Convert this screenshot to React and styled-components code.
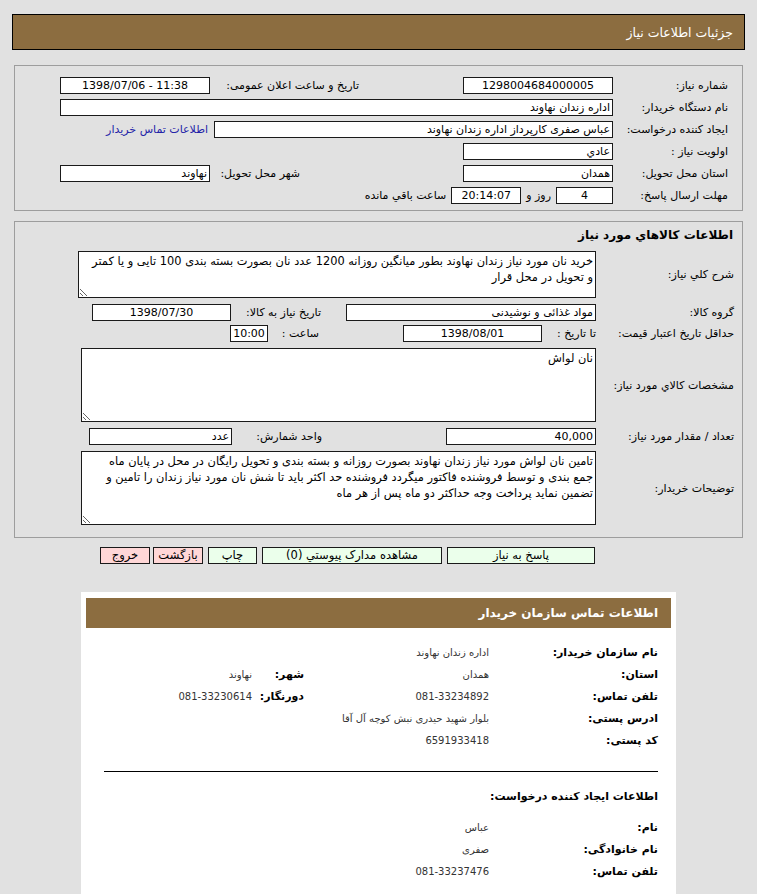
import React from 'react';
import styled, { createGlobalStyle } from 'styled-components';

const GlobalStyle = createGlobalStyle`
  html, body {
    margin: 0;
    padding: 0;
    background: #e1e1e1;
  }
  * {
    box-sizing: border-box;
  }
`;

const Page = styled.div`
  direction: rtl;
  padding: 14px 12px 0;
  font-family: "DejaVu Sans", Tahoma, sans-serif;
  font-size: 11px;
  color: #000;
`;

const TopBar = styled.div`
  height: 36px;
  background: #8c6d40;
  border: 1px solid #000;
  color: #fff;
  display: flex;
  align-items: center;
  padding-right: 11px;
  font-size: 12.5px;
`;

const Panel = styled.div`
  margin: ${p => p.top || 0}px 2px 0;
  border: 1px solid #9d9d9d;
  padding: ${p => p.pad};
  display: flex;
  flex-direction: column;
  gap: ${p => p.gap || 0}px;
`;

const Row = styled.div`
  display: flex;
  align-items: center;
  height: ${p => (p.h ? `${p.h}px` : 'auto')};
  margin-top: ${p => p.mt || 0}px;
`;

const Label = styled.div`
  width: ${p => p.w}px;
  margin-right: ${p => p.mr || 0}px;
  flex-shrink: 0;
  white-space: nowrap;
`;

const Field = styled.div`
  width: ${p => p.w}px;
  height: 17px;
  flex-shrink: 0;
  background: #fff;
  border: 1px solid #1a1a1a;
  padding: 0 2px;
  line-height: 15px;
  text-align: ${p => p.align || 'right'};
  direction: ${p => (p.ltr ? 'ltr' : 'rtl')};
  white-space: nowrap;
  overflow: hidden;
`;

const Note = styled.span`
  margin: 0 ${p => p.mx || 0}px;
  white-space: nowrap;
`;

const ContactLink = styled.a`
  margin-right: 6px;
  color: #2323a8;
  text-decoration: none;
  white-space: nowrap;
`;

const Heading = styled.div`
  font-weight: bold;
  font-size: 12px;
  padding-right: 1px;
  height: 20px;
  line-height: 20px;
`;

const Memo = styled.textarea`
  width: ${p => p.w}px;
  height: ${p => p.h}px;
  flex-shrink: 0;
  margin: 0;
  padding: 1px 2px 1px 10px;
  border: 1px solid #1a1a1a;
  background: #fff;
  font-family: "DejaVu Sans", Tahoma, sans-serif;
  font-size: 11.4px;
  line-height: 16px;
  color: #000;
  direction: rtl;
  overflow: hidden;
  outline: none;
`;

const ButtonBar = styled.div`
  display: flex;
  gap: 5px;
  padding-right: 150px;
  margin-top: 9px;
`;

const Button = styled.button`
  width: ${p => p.w}px;
  height: 17px;
  padding: 0;
  border: 1px solid #1a1a1a;
  background: ${p => (p.tone === 'red' ? '#ffd7d7' : '#ebffeb')};
  font-family: "DejaVu Sans", Tahoma, sans-serif;
  font-size: 11.5px;
  color: #000;
  line-height: 15px;
  margin-right: ${p => p.mr || 0}px;
`;

const Card = styled.div`
  width: 595px;
  margin: 28px auto 0;
  background: #fff;
  padding: 6px 5px 20px;
`;

const CardHead = styled.div`
  height: 30px;
  background: #8c6d40;
  color: #fff;
  font-weight: bold;
  font-size: 12px;
  display: flex;
  align-items: center;
  padding-right: 13px;
`;

const CardBody = styled.div`
  padding: 13px 13px 0 18px;
`;

const InfoRow = styled.div`
  display: grid;
  grid-template-columns: 169px 185px 52px 1fr;
  align-items: center;
  height: 22px;
`;

const InfoKey = styled.div`
  font-weight: bold;
  font-size: 11px;
  white-space: nowrap;
`;

const InfoVal = styled.div`
  font-size: 10px;
  color: #333;
  white-space: nowrap;
`;

const Rule = styled.hr`
  margin: 20px 0 0;
  border: 0;
  border-top: 1px solid #000;
`;

const SubHeading = styled.div`
  font-weight: bold;
  font-size: 11px;
  height: 22px;
  line-height: 22px;
  margin: 14px 0 8px;
`;

const buyer = [
  ['نام سازمان خریدار:', 'اداره زندان نهاوند'],
  ['استان:', 'همدان', 'شهر:', 'نهاوند'],
  ['تلفن تماس:', '081-33234892', 'دورنگار:', '081-33230614'],
  ['ادرس پستی:', 'بلوار شهید حیدری نبش کوچه آل آقا'],
  ['کد پستی:', '6591933418'],
];

const creator = [
  ['نام:', 'عباس'],
  ['نام خانوادگی:', 'صفری'],
  ['تلفن تماس:', '081-33237476'],
];

const InfoLine = ({ item }) => (
  <InfoRow>
    <InfoKey>{item[0]}</InfoKey>
    <InfoVal>{item[1]}</InfoVal>
    {item[2] && <InfoKey>{item[2]}</InfoKey>}
    {item[3] && <InfoVal>{item[3]}</InfoVal>}
  </InfoRow>
);

export default function App() {
  return (
    <>
      <GlobalStyle />
      <Page>
        <TopBar>جزئیات اطلاعات نیاز</TopBar>

        <Panel top={15} pad="8px 14px 4px 0">
          <Row h={22}>
            <Label w={115}>شماره نیاز:</Label>
            <Field w={150} align="center">1298004684000005</Field>
            <Label w={149} mr={104}>تاریخ و ساعت اعلان عمومی:</Label>
            <Field w={150} align="center" ltr>1398/07/06 - 11:38</Field>
          </Row>
          <Row h={22}>
            <Label w={115}>نام دستگاه خریدار:</Label>
            <Field w={553}>اداره زندان نهاوند</Field>
          </Row>
          <Row h={22}>
            <Label w={115}>ایجاد کننده درخواست:</Label>
            <Field w={399}>عباس صفری کارپرداز اداره زندان نهاوند</Field>
            <ContactLink href="#">اطلاعات تماس خریدار</ContactLink>
          </Row>
          <Row h={22}>
            <Label w={115}>اولویت نیاز :</Label>
            <Field w={150}>عادي</Field>
          </Row>
          <Row h={22}>
            <Label w={115}>استان محل تحویل:</Label>
            <Field w={150}>همدان</Field>
            <Label w={90} mr={163}>شهر محل تحویل:</Label>
            <Field w={150}>نهاوند</Field>
          </Row>
          <Row h={22}>
            <Label w={115}>مهلت ارسال پاسخ:</Label>
            <Field w={57} align="center">4</Field>
            <Note mx={5}>روز و</Note>
            <Field w={70} align="center">20:14:07</Field>
            <Note mx={5}>ساعت باقي مانده</Note>
          </Row>
        </Panel>

        <Panel top={10} pad="3px 8px 12px 0" gap={6}>
          <Heading>اطلاعات کالاهاي مورد نیاز</Heading>
          <Row>
            <Label w={138}>شرح کلي نیاز:</Label>
            <Memo w={518} h={47} readOnly defaultValue="خرید نان مورد نیاز زندان نهاوند بطور میانگین روزانه 1200 عدد نان بصورت بسته بندی 100 تایی و یا کمتر و تحویل در محل قرار" />
          </Row>
          <Row>
            <Label w={138}>گروه کالا:</Label>
            <Field w={250}>مواد غذائی و نوشیدنی</Field>
            <Label w={90} mr={25}>تاریخ نیاز به کالا:</Label>
            <Field w={139} align="center">1398/07/30</Field>
          </Row>
          <Row mt={-2}>
            <Label w={138}>حداقل تاریخ اعتبار قیمت:</Label>
            <Label w={54}>تا تاریخ :</Label>
            <Field w={139} align="center">1398/08/01</Field>
            <Label w={51} mr={84}>ساعت :</Label>
            <Field w={38} align="center">10:00</Field>
          </Row>
          <Row>
            <Label w={138}>مشخصات کالاي مورد نیاز:</Label>
            <Memo w={515} h={74} readOnly defaultValue="نان لواش" />
          </Row>
          <Row>
            <Label w={138}>تعداد / مقدار مورد نیاز:</Label>
            <Field w={150}>40,000</Field>
            <Label w={90} mr={124}>واحد شمارش:</Label>
            <Field w={143}>عدد</Field>
          </Row>
          <Row>
            <Label w={138}>توضیحات خریدار:</Label>
            <Memo w={515} h={74} readOnly defaultValue="تامین نان لواش مورد نیاز زندان نهاوند بصورت روزانه و بسته بندی و تحویل رایگان در محل در پایان ماه جمع بندی و توسط فروشنده فاکتور میگردد فروشنده حد اکثر باید تا شش نان مورد نیاز زندان را تامین و تضمین نماید پرداخت وجه حداکثر دو ماه پس از هر ماه" />
          </Row>
        </Panel>

        <ButtonBar>
          <Button w={148}>پاسخ به نیاز</Button>
          <Button w={180}>مشاهده مدارک پیوستي (0)</Button>
          <Button w={49}>چاپ</Button>
          <Button w={50} tone="red">بازگشت</Button>
          <Button w={50} tone="red" mr={-2}>خروج</Button>
        </ButtonBar>

        <Card>
          <CardHead>اطلاعات تماس سازمان خریدار</CardHead>
          <CardBody>
            {buyer.map((item, i) => <InfoLine key={i} item={item} />)}
            <Rule />
            <SubHeading>اطلاعات ایجاد کننده درخواست:</SubHeading>
            {creator.map((item, i) => <InfoLine key={i} item={item} />)}
          </CardBody>
        </Card>
      </Page>
    </>
  );
}
